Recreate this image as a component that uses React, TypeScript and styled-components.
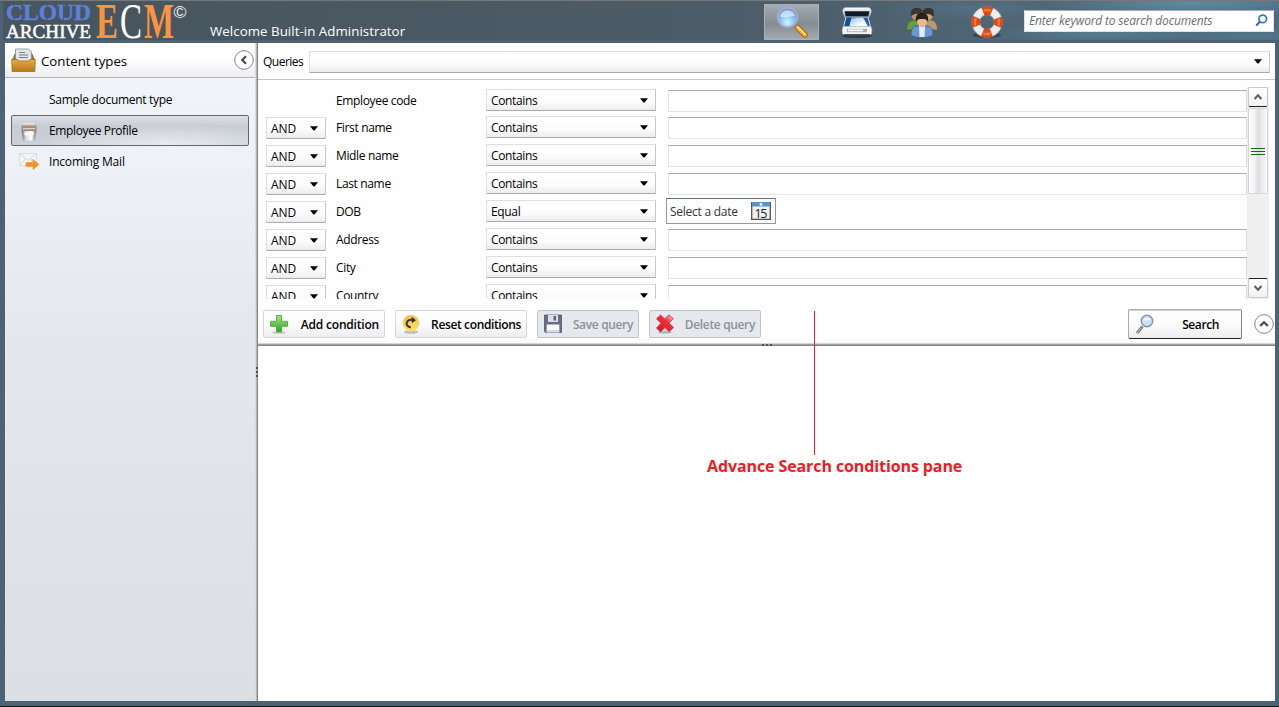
import React from "react";
import styled, { createGlobalStyle, css } from "styled-components";

const Global = createGlobalStyle`
  * { box-sizing: border-box; }
  body { margin: 0; font-family: "Open Sans", "Noto Sans", sans-serif; font-size: 12px; color: #000; }
  svg { display: block; flex: none; overflow: visible; }
`;

const Frame = styled.div`
  width: 1279px;
  height: 707px;
  display: flex;
  flex-direction: column;
  overflow: hidden;
  position: relative;
  background: #4e6275;
  border-bottom: 1px solid #121c24;
`;

const Label = styled.span<{ $size?: number; $track?: number }>`
  display: inline-block;
  white-space: nowrap;
  flex: none;
  font-size: ${(p) => p.$size ?? 12}px;
  letter-spacing: ${(p) => p.$track ?? -0.25}px;
`;

const Header = styled.header`
  height: 43px;
  flex: none;
  display: flex;
  align-items: flex-start;
  padding: 0 5px;
  border-top: 1px solid #77787a;
  background:
    linear-gradient(#4e6275, #4e6275) 0 100% / 100% 3px no-repeat,
    linear-gradient(90deg, #4e6275 3px, transparent 3px),
    radial-gradient(ellipse 150px 14px at 1190px 2px, #5d8ba0 0%, transparent 100%),
    radial-gradient(ellipse 110px 10px at 1100px 33px, #578297cc 0%, transparent 100%),
    radial-gradient(ellipse 100px 9px at 1250px 35px, #53798dcc 0%, transparent 100%),
    radial-gradient(ellipse 90px 12px at 975px 8px, #56788a99 0%, transparent 100%),
    linear-gradient(90deg, #47555f 0, #4a5862 30%, #4d5d69 60%, #4f6676 80%, #4d6a7d 100%);
`;

const Welcome = styled.div`
  width: 577px;
  flex: none;
  padding: 21px 0 0 23px;
  line-height: 18px;
  color: #fff;
`;

const NavButton = styled.div<{ $active?: boolean; $w: number }>`
  width: ${(p) => p.$w}px;
  flex: none;
  height: 36px;
  margin-top: 3px;
  display: flex;
  align-items: center;
  justify-content: center;
  ${(p) =>
    p.$active &&
    css`
      border: 1px solid #a9b0b6;
      background: linear-gradient(#a4acb3 0%, #8f979e 35%, #848d94 55%, #a3a9ae 100%);
    `}
`;

const SearchBox = styled.div`
  width: 250px;
  flex: none;
  height: 22px;
  margin: 9px 0 0 auto;
  padding: 0 5px 2px 4px;
  display: flex;
  align-items: center;
  justify-content: space-between;
  background: #fff;
  border: 1px solid #dfe3e8;
  border-top-color: #a8adb2;
  color: #6d6d6d;
  font-style: italic;
`;

const Body = styled.div`
  flex: 1;
  min-height: 0;
  display: flex;
  padding: 0 4px 5px 5px;
`;

const Sidebar = styled.aside`
  width: 250px;
  flex: none;
  background: linear-gradient(#f1f6fa 0, #eef2f7 110px, #e4e8ec 300px, #dde1e5 560px, #dce0e4 100%);
`;

const SideHeader = styled.div`
  height: 35px;
  display: flex;
  align-items: center;
  padding: 0 1px 0 6px;
  background: linear-gradient(#fff, #fdfdfe 55%, #ececee);
  border-bottom: 1px solid #b4b6b8;
`;

const SideTitle = styled.div`
  flex: 1;
  padding: 1px 0 0 5px;
`;

const TypeList = styled.div`
  padding: 6px 6px 0;
`;

const TypeItem = styled.div<{ $selected?: boolean }>`
  height: 31px;
  display: flex;
  align-items: center;
  border: 1px solid ${(p) => (p.$selected ? "#646669" : "transparent")};
  border-radius: 2px;
  background: ${(p) =>
    p.$selected ? "radial-gradient(ellipse 130px 20px at 155px 29px, #e8ebef, transparent), linear-gradient(#dce0e5, #c8cdd5 35%, #ccd1d9)" : "none"};
`;

const TypeIcon = styled.div`
  width: 37px;
  padding-left: 7px;
`;

const VSplitter = styled.div`
  width: 3px;
  flex: none;
  display: flex;
  flex-direction: column;
  align-items: flex-end;
  padding-top: 324px;
  gap: 2px;
  background: linear-gradient(90deg, #d9dbdd 1px, #bbbbbc 1px, #b5b5b6 2px, #858586 2px);
`;

const Dot = styled.i`
  width: 2px;
  height: 2px;
  background: #505052;
`;

const Main = styled.main`
  flex: 1;
  min-width: 0;
  display: flex;
  flex-direction: column;
  background: #fefefe;
`;

const QueryBar = styled.div`
  height: 37px;
  flex: none;
  display: flex;
  align-items: center;
  padding: 1px 5px 0 5px;
  border-bottom: 1px solid #c4c4c4;
`;

const QueryLabel = styled.div`
  width: 46px;
`;

const SelectBox = styled.div<{ $w?: number }>`
  height: 22px;
  flex: ${(p) => (p.$w ? `0 0 ${p.$w}px` : 1)};
  display: flex;
  align-items: center;
  justify-content: space-between;
  padding: 0 7px 0 4px;
  border: 1px solid #dedfe0;
  border-bottom-color: #a9abad;
  border-right-color: #c6c7c9;
  background: linear-gradient(#fff, #fcfcfd 60%, #ececee);
`;

const Conditions = styled.div`
  height: 219px;
  flex: none;
  display: flex;
  padding-right: 6px;
`;

const Rows = styled.div`
  flex: 1;
  padding: 9px 0 0 8px;
  overflow: hidden;
`;

const Row = styled.div<{ $first?: boolean }>`
  height: ${(p) => (p.$first ? 27 : 28)}px;
  display: flex;
  align-items: flex-start;
`;

const Joiner = styled.div`
  width: 60px;
  padding-top: 1px;
  display: flex;
`;

const FieldName = styled.div`
  width: 160px;
  padding-left: 10px;
  line-height: 23px;
`;

const Field = styled.div`
  flex: 1;
  height: 22px;
  margin: 1px 0 0 12px;
  background: #fff;
  border: 1px solid #e0e4ec;
  border-top-color: #a9abad;
  border-right-color: #d8dce4;
`;

const DateField = styled.div`
  width: 110px;
  height: 26px;
  margin: -2px 0 0 10px;
  padding: 0 4px 0 3px;
  display: flex;
  align-items: center;
  justify-content: space-between;
  background: #fff;
  border: 1px solid #8c9aa6;
  border-top-color: #60727e;
  color: #333;
`;

const ScrollBar = styled.div`
  width: 22px;
  padding: 7px 1px 1px;
  display: flex;
  flex-direction: column;
  background: linear-gradient(transparent 7px, #efeff0 7px);
`;

const ScrollButton = styled.div<{ $down?: boolean }>`
  height: 20px;
  flex: none;
  display: flex;
  align-items: center;
  justify-content: center;
  border: 1px solid #c9c9cb;
  border-radius: 2px;
  background: linear-gradient(#fff, #f1f1f3);
  ${(p) => (p.$down ? "border-top-color: #222; margin-top: auto;" : "border-bottom-color: #222;")}
`;

const Thumb = styled.div`
  height: 86px;
  margin-top: 1px;
  display: flex;
  flex-direction: column;
  align-items: center;
  justify-content: center;
  gap: 2px;
  border: 1px solid #d4d5d7;
  border-radius: 2px;
  background: linear-gradient(90deg, #fdfdfd, #f4f4f5 30%, #dcdddf 50%, #efeff1 80%, #fafafa);
`;

const Grip = styled.i`
  width: 14px;
  height: 1px;
  background: #0a6e0a;
`;

const Actions = styled.div`
  height: 44px;
  flex: none;
  display: flex;
  align-items: flex-start;
  padding: 11px 1px 0 5px;
  gap: 10px;
`;

const Button = styled.div<{ $w: number; $off?: boolean; $primary?: boolean }>`
  width: ${(p) => p.$w}px;
  height: 28px;
  flex: none;
  display: flex;
  align-items: center;
  justify-content: space-between;
  padding: 0 5px 0 5px;
  border: 1px solid ${(p) => (p.$off ? "#c0c3c7" : "#d4d6d9")};
  border-radius: 2px;
  font-weight: 600;
  color: ${(p) => (p.$off ? "#8f9193" : "#000")};
  background: ${(p) => (p.$off ? "#e5e9ee" : "linear-gradient(#fff, #fcfcfd 50%, #ededf0)")};
  ${(p) =>
    p.$primary &&
    css`
      height: 30px;
      margin: -1px 2px 0 auto;
      padding: 0 22px 0 6px;
      border: 1px solid #a9abad;
      border-bottom: 1px solid #1d1f22;
      border-right-color: #808285;
      box-shadow: inset 0 1px #d2d3d5;
    `}
`;

const ButtonText = styled.span<{ $track: number }>`
  white-space: nowrap;
  padding-top: 1px;
  letter-spacing: ${(p) => p.$track}px;
`;

const CollapseSlot = styled.div`
  padding-top: 4px;
`;

const HSplitter = styled.div`
  height: 3px;
  flex: none;
  display: flex;
  justify-content: center;
  align-items: flex-end;
  gap: 2px;
  background: linear-gradient(#d6d6d7 1px, #a2a2a4 1px, #a2a2a4 2px, #858587 2px);
`;

const Note = styled.div`
  position: absolute;
  left: 707px;
  top: 311px;
  width: 256px;
  color: #ed1c24;
  font-family: "Open Sans", sans-serif;
  font-weight: 700;
  font-size: 16px;
  letter-spacing: -0.1px;
  line-height: 22px;
  white-space: nowrap;
`;

const NoteLine = styled.div`
  width: 1px;
  height: 144px;
  margin-left: 107px;
  background: #ed1c24;
`;

const Caret = () => (
  <svg width="8" height="5" viewBox="0 0 8 5"><path d="M0 .3h8L4.5 4.6h-1z" fill="#000" /></svg>
);

const Chevron = ({ turn = 0 }: { turn?: number }) => (
  <svg width="10" height="10" viewBox="0 0 10 10">
    <path d="M1.600 7 5 3.200 8.400 7" fill="none" stroke="#5a5a5b" strokeWidth="2" transform={`rotate(${turn} 5 5)`} />
  </svg>
);

const RoundToggle = ({ turn }: { turn: number }) => (
  <svg width="20" height="20" viewBox="0 0 20 20">
    <circle cx="10" cy="10" r="9.3" fill="#fdfdfd" stroke="#858587" />
    <path d="M6.2 12 10 8.2l3.800 3.800" fill="none" stroke="#4a4a4c" strokeWidth="2.200" transform={`rotate(${turn} 10 10)`} />
  </svg>
);

const Logo = () => (
  <svg width="182" height="42" viewBox="5 0 182 42" fontFamily="'Liberation Serif', serif" fontWeight="700">
    <text x="6" y="19" fontSize="24" fill="#5c80dc" stroke="#5c80dc" strokeWidth=".5" textLength="85" lengthAdjust="spacingAndGlyphs">CLOUD</text>
    <path d="M14 2v18M47 2v18M63.500 2v18M82 2v18" stroke="#4a5862" strokeWidth="1" />
    <text x="6" y="36.500" fontSize="19" fill="#fff" fontWeight="400" stroke="#fff" strokeWidth=".5" textLength="85" lengthAdjust="spacingAndGlyphs">ARCHIVE</text>
    <text x="96" y="36.500" fontSize="51" fill="#fb9440" textLength="22" lengthAdjust="spacingAndGlyphs">E</text>
    <text x="120" y="36.500" fontSize="50" fill="#fff" fontWeight="400" textLength="22" lengthAdjust="spacingAndGlyphs">C</text>
    <text x="144" y="36.500" fontSize="51" fill="#fb9440" textLength="30" lengthAdjust="spacingAndGlyphs">M</text>
    <text x="173.500" y="17" fontSize="17" fill="#e8eaec" fontFamily="Liberation Sans, sans-serif" fontWeight="400" textLength="13" lengthAdjust="spacingAndGlyphs">©</text>
  </svg>
);

const LensIcon = () => (
  <svg width="32" height="32" viewBox="0 0 32 32">
    <defs>
      <radialGradient id="lens" cx=".5" cy=".75" r=".75"><stop offset="0" stopColor="#d4f5ff" /><stop offset=".5" stopColor="#86c4f2" /><stop offset="1" stopColor="#588fd8" /></radialGradient>
      <linearGradient id="hold" x1="0" y1="1" x2="1" y2="0"><stop offset="0" stopColor="#e98a0c" /><stop offset=".5" stopColor="#ffe17a" /><stop offset="1" stopColor="#d87806" /></linearGradient>
    </defs>
    <path d="m18 18 5 5" stroke="#8a88a8" strokeWidth="3" />
    <path d="m21.500 21.500 7.500 7.500" stroke="#a65c0c" strokeWidth="5.400" strokeLinecap="round" />
    <path d="m21.500 21.500 7.500 7.500" stroke="#f7b52e" strokeWidth="3.800" strokeLinecap="round" />
    <path d="m22 21 7 7" stroke="#ffe58c" strokeWidth="1.300" strokeLinecap="round" />
    <circle cx="11.500" cy="11.500" r="9.700" fill="url(#lens)" stroke="#aaa8cc" strokeWidth="2" />
    <path d="M4 10.500a7.600 7.600 0 0 1 15 0c-4-2-8 3-15 0z" fill="#eaf5ff" opacity=".65" />
  </svg>
);

const ScannerIcon = () => (
  <svg width="32" height="32" viewBox="0 0 32 32">
    <defs>
      <linearGradient id="lid" x1="0" y1="0" x2="0" y2="1"><stop offset="0" stopColor="#fff" /><stop offset="1" stopColor="#9aa4ad" /></linearGradient>
      <linearGradient id="sheet" x1="0" y1="0" x2="1" y2="1"><stop offset="0" stopColor="#8fc0f0" /><stop offset=".7" stopColor="#fff" /></linearGradient>
    </defs>
    <ellipse cx="16" cy="30" rx="15" ry="2" fill="#15212b" opacity=".6" />
    <path d="M4 1.500h24q2.500 1 2.500 4l-2 6h-25l-2-6q0-3 2.500-4z" fill="url(#lid)" />
    <path d="M3.500 5.200h25l-1.500 6H5z" fill="#101c28" />
    <path d="M5 11h22l2.500 10h-27z" fill="#1d62b4" stroke="#d4dde6" strokeWidth="1" />
    <path d="m10 12.500 12-1 5 9H8.500z" fill="url(#sheet)" />
    <path d="m5.500 11.500h5l-3 9H3.500z" fill="#174e96" />
    <path d="M2 20.500h28q1.500 3 .5 7-1 2-3.500 2H5q-2.500 0-3.500-2-1-4 .5-7z" fill="#f3f4f5" stroke="#aab1b8" strokeWidth=".6" />
    <path d="M6 22.800h20v3.400H6z" fill="#a9afb5" /><path d="M7 23.500h15v1.700H7z" fill="#fff" />
    <path d="M3 29h26" stroke="#20272e" strokeWidth="1.600" />
  </svg>
);

const UsersIcon = () => (
  <svg width="32" height="32" viewBox="0 0 32 32">
    <path d="M.5 24c0-7 3-10 8-10s8 4 8 10z" fill="#699b42" stroke="#38611f" strokeWidth=".7" />
    <path d="M16 24c0-7 3-10 8-10s7.500 4 7.500 10z" fill="#b49a75" stroke="#6e5a3e" strokeWidth=".7" />
    <circle cx="10.500" cy="9.500" r="4.800" fill="#c99365" /><circle cx="22" cy="9.500" r="4.800" fill="#d3a074" />
    <path d="M5 10c-1-6 2-8.500 6-8 4-.5 6 2 5.500 6-3 1.500-6-1.500-8.500.5z" fill="#3b3734" />
    <path d="M16.500 8c0-4 2-6.500 6-6 4-.5 6.500 3 5 8.500-2-1-3-2.500-5-2.500z" fill="#35312d" />
    <path d="M5 29c0-6 2-8.500 6-9h10c4 .5 6 3 6 9-4 3.500-18 3.500-22 0z" fill="#6c98d1" stroke="#335d96" strokeWidth=".8" />
    <path d="m13 20 3 1 3-1-.5 11h-5z" fill="#e4edf6" />
    <ellipse cx="16" cy="15.500" rx="4.900" ry="5.200" fill="#eab98c" />
    <path d="M10 16c-1-6.500 1.500-9 6-9s7 2.500 6 9c-1-2.500-3-3-6-3s-5 .5-6 3z" fill="#25221f" />
  </svg>
);

const RingIcon = () => (
  <svg width="34" height="34" viewBox="0 0 34 34">
    <ellipse cx="17" cy="30" rx="14" ry="3" fill="#26333d" opacity=".6" />
    <circle cx="17" cy="17" r="11.200" fill="none" stroke="#a9afb5" strokeWidth="8.600" />
    <circle cx="17" cy="17" r="11.200" fill="none" stroke="#ebedee" strokeWidth="7" />
    <circle cx="17" cy="17" r="11.200" fill="none" stroke="#d94c14" strokeWidth="9" strokeDasharray="8.800 8.790" strokeDashoffset="4.400" />
    <circle cx="17" cy="17" r="12" fill="none" stroke="#f0763e" strokeWidth="2.500" strokeDasharray="7.400 11.450" strokeDashoffset="3.700" />
  </svg>
);

const BoxSearchIcon = () => (
  <svg width="13" height="13" viewBox="0 0 13 13" fill="none">
    <circle cx="7.700" cy="4.900" r="3.800" stroke="#3a77ba" strokeWidth="1.700" />
    <path d="m5.200 7.400-4 4.200" stroke="#315fa5" strokeWidth="2" />
  </svg>
);

const FolderIcon = () => (
  <svg width="25" height="25" viewBox="0 0 25 25">
    <defs><linearGradient id="fold" x1="0" y1="0" x2="0" y2="1"><stop offset="0" stopColor="#e3ac45" /><stop offset="1" stopColor="#b9781a" /></linearGradient></defs>
    <path d="M1 12 3.500 6h18L24 12v11H1z" fill="#a66f20" />
    <path d="M4.500 1h13l3 3v12h-16z" fill="#dfe7ea" stroke="#7e8b91" strokeWidth=".8" />
    <path d="M8 4.500h6M8 7h9M8 9.500h9" stroke="#74818a" strokeWidth="1" />
    <path d="M.7 11.500h6l1 1.500h10l1-1.500h5.600l-.5 12H1.200z" fill="url(#fold)" stroke="#9a6414" strokeWidth=".7" />
  </svg>
);

const JarIcon = () => (
  <svg width="20" height="20" viewBox="0 0 20 20">
    <defs><linearGradient id="jar"><stop offset="0" stopColor="#6f7072" /><stop offset=".3" stopColor="#d9dadb" /><stop offset=".65" stopColor="#fff" /><stop offset="1" stopColor="#77787a" /></linearGradient></defs>
    <path d="M4 .5h12l1 4H3z" fill="#dadbdc" stroke="#bbb" strokeWidth=".5" />
    <path d="M2.500 4.500h15v6h-15z" fill="#8f8f90" /><path d="M3.500 5.200h13v4h-13z" fill="#b98a68" />
    <path d="M4 7h12v1.200H4z" fill="#e6d3c4" />
    <path d="M2.500 10h15l-1.500 9.500H4z" fill="url(#jar)" />
    <path d="M5.500 11h9v3q-4.500 1.500-9 0z" fill="#f9f9f9" />
  </svg>
);

const MailIcon = () => (
  <svg width="21" height="19" viewBox="0 0 21 19">
    <path d="M.5 1.500h17v12H.5z" fill="#f4f5f6" stroke="#dcdfe1" />
    <path d="m.5 1.500 8.500 7 8.500-7M.5 13.500l6-6.500M17.500 13.500l-6-6.500" fill="none" stroke="#d6d9db" />
    <path d="M7 10.500h7V7.300l6 5.200-6 5v-3H7z" fill="#f89427" stroke="#e9851b" strokeWidth=".5" />
  </svg>
);

const CalendarIcon = () => (
  <svg width="20" height="18" viewBox="0 0 20 18">
    <path d="M.7.7h18.600v16.600H.7z" fill="#f0f1f2" stroke="#4e5054" strokeWidth="1.300" />
    <path d="M1 0h18v4.500H1z" fill="#5b93c5" /><circle cx="10" cy="2.400" r="1.400" fill="#fff" />
    <text x="3.500" y="15.800" fontSize="12.500" fontFamily="Open Sans, sans-serif" fill="#222" textLength="13">15</text>
  </svg>
);

const PlusIcon = () => (
  <svg width="20" height="20" viewBox="0 0 20 20">
    <defs><linearGradient id="plus" x1="0" y1="0" x2="0" y2="1"><stop offset="0" stopColor="#a6e57c" /><stop offset="1" stopColor="#28a621" /></linearGradient></defs>
    <ellipse cx="10" cy="18.500" rx="7" ry="1.300" fill="#aaa" opacity=".6" />
    <path d="M7.500 1.500h5v5.800h6v5h-6V18h-5v-5.700h-6v-5h6z" fill="url(#plus)" stroke="#59ae4a" />
  </svg>
);

const ResetIcon = () => (
  <svg width="20" height="20" viewBox="0 0 20 20">
    <defs><linearGradient id="orb" x1="0" y1="0" x2="0" y2="1"><stop offset="0" stopColor="#f3c052" /><stop offset="1" stopColor="#fde062" /></linearGradient></defs>
    <ellipse cx="10" cy="18" rx="7" ry="1.700" fill="#999" opacity=".6" />
    <circle cx="10" cy="9.200" r="8.300" fill="url(#orb)" />
    <path d="M9.800 13.500C6 12.700 5 10.300 6 8c.9-1.900 3-2.500 5.300-2" fill="none" stroke="#343431" strokeWidth="2" />
    <path d="m10.800 2.800 4.200 3.400-4.200 3z" fill="#343431" />
  </svg>
);

const SaveIcon = () => (
  <svg width="20" height="20" viewBox="0 0 20 20">
    <path d="M1.500 1h17v17.500h-16l-1-1z" fill="#6c6c8a" stroke="#54546e" strokeWidth=".8" />
    <path d="M5 1h10v7H5z" fill="#d9dde8" /><path d="M10.500 2h2.500v4.500h-2.500z" fill="#61617e" />
    <path d="M3.700 10.500h12.600v8H3.700z" fill="#fafafa" /><path d="M3.700 16h12.600v2H3.700z" fill="#d7dae0" />
  </svg>
);

const DeleteIcon = () => (
  <svg width="20" height="20" viewBox="0 0 20 20">
    <defs><linearGradient id="del" x1="1" y1="0" x2="0" y2="1"><stop offset="0" stopColor="#ffd0d4" /><stop offset=".4" stopColor="#ef3039" /><stop offset="1" stopColor="#d70d18" /></linearGradient></defs>
    <ellipse cx="10" cy="18.300" rx="7" ry="1.200" fill="#888" opacity=".6" />
    <path d="m1.500 4.800 4-3.800L9.700 5l4-4.200 4.600 3.800L14 9l4.500 4.500-4.300 4.200L10 13.500 5.500 18l-4-4L6 9.300z" fill="url(#del)" stroke="#c1323b" strokeWidth=".8" />
  </svg>
);

const SmallLens = () => (
  <svg width="20" height="21" viewBox="0 0 20 21">
    <path d="m7.500 12.500-5.500 6.700" stroke="#77797c" strokeWidth="2.800" />
    <path d="m6.500 13.700-4.500 5.500" stroke="#c5c7ca" strokeWidth="1" />
    <circle cx="12" cy="7" r="5.700" fill="#c8e1fb" stroke="#8b8f9b" strokeWidth="1.400" />
    <path d="M8 7a4.200 4.200 0 0 1 7.800-1c-3 0-5 .3-7.800 1z" fill="#fff" opacity=".7" />
  </svg>
);

const conditions = [
  ["Employee code", "Contains"],
  ["First name", "Contains"],
  ["Midle name", "Contains"],
  ["Last name", "Contains"],
  ["DOB", "Equal"],
  ["Address", "Contains"],
  ["City", "Contains"],
  ["Country", "Contains"],
];

export default function App() {
  return (
    <>
      <Global />
      <Frame>
        <Header>
          <Logo />
          <Welcome>
            <Label $size={13.3} $track={0.04}>Welcome Built-in Administrator</Label>
          </Welcome>
          <NavButton $active $w={55}><LensIcon /></NavButton>
          <NavButton $w={75}><ScannerIcon /></NavButton>
          <NavButton $w={55}><UsersIcon /></NavButton>
          <NavButton $w={75}><RingIcon /></NavButton>
          <SearchBox>
            <Label $track={-0.17}>Enter keyword to search documents</Label>
            <BoxSearchIcon />
          </SearchBox>
        </Header>
        <Body>
          <Sidebar>
            <SideHeader>
              <FolderIcon />
              <SideTitle><Label $size={13.3} $track={-0.02}>Content types</Label></SideTitle>
              <RoundToggle turn={-90} />
            </SideHeader>
            <TypeList>
              <TypeItem><TypeIcon /><Label $track={-0.3}>Sample document type</Label></TypeItem>
              <TypeItem $selected><TypeIcon><JarIcon /></TypeIcon><Label $track={-0.35}>Employee Profile</Label></TypeItem>
              <TypeItem><TypeIcon><MailIcon /></TypeIcon><Label $track={-0.2}>Incoming Mail</Label></TypeItem>
            </TypeList>
          </Sidebar>
          <VSplitter><Dot /><Dot /><Dot /></VSplitter>
          <Main>
            <QueryBar>
              <QueryLabel><Label $track={-0.5}>Queries</Label></QueryLabel>
              <SelectBox><span /><Caret /></SelectBox>
            </QueryBar>
            <Conditions>
              <Rows>
                {conditions.map(([name, op], i) => (
                  <Row key={name} $first={i === 0}>
                    <Joiner>{i > 0 && <SelectBox $w={60}><Label $track={-0.1}>AND</Label><Caret /></SelectBox>}</Joiner>
                    <FieldName><Label $track={-0.35}>{name}</Label></FieldName>
                    <SelectBox $w={170}><Label $track={-0.35}>{op}</Label><Caret /></SelectBox>
                    {name === "DOB" ? (
                      <DateField><Label>Select a date</Label><CalendarIcon /></DateField>
                    ) : (
                      <Field />
                    )}
                  </Row>
                ))}
              </Rows>
              <ScrollBar>
                <ScrollButton><Chevron /></ScrollButton>
                <Thumb><Grip /><Grip /><Grip /></Thumb>
                <ScrollButton $down><Chevron turn={180} /></ScrollButton>
              </ScrollBar>
            </Conditions>
            <Actions>
              <Button $w={122}><PlusIcon /><ButtonText $track={-0.2}>Add condition</ButtonText></Button>
              <Button $w={132}><ResetIcon /><ButtonText $track={-0.37}>Reset conditions</ButtonText></Button>
              <Button $w={102} $off><SaveIcon /><ButtonText $track={-0.35}>Save query</ButtonText></Button>
              <Button $w={112} $off><DeleteIcon /><ButtonText $track={-0.35}>Delete query</ButtonText></Button>
              <Button $w={114} $primary><SmallLens /><ButtonText $track={-0.4}>Search</ButtonText></Button>
              <CollapseSlot><RoundToggle turn={0} /></CollapseSlot>
            </Actions>
            <HSplitter><Dot /><Dot /><Dot /></HSplitter>
          </Main>
        </Body>
        <Note><NoteLine />Advance Search conditions pane</Note>
      </Frame>
    </>
  );
}
